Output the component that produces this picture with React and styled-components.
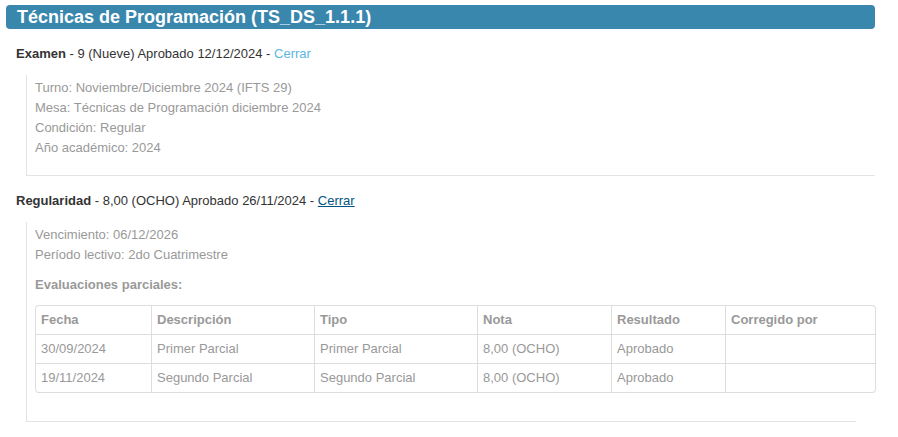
import React from 'react';
import styled, { createGlobalStyle } from 'styled-components';

const GlobalStyle = createGlobalStyle`
  body {
    margin: 0;
    background: #fff;
    font-family: "Liberation Sans", Arial, sans-serif;
    font-size: 13px;
    line-height: 20px;
    color: #333;
  }
`;

const rows = [
  { fecha: '30/09/2024', desc: 'Primer Parcial', tipo: 'Primer Parcial', nota: '8,00 (OCHO)', res: 'Aprobado', corr: '' },
  { fecha: '19/11/2024', desc: 'Segundo Parcial', tipo: 'Segundo Parcial', nota: '8,00 (OCHO)', res: 'Aprobado', corr: '' },
];

const columns = [
  ['Fecha', 'fecha', 116],
  ['Descripción', 'desc', 163],
  ['Tipo', 'tipo', 163],
  ['Nota', 'nota', 134],
  ['Resultado', 'res', 114],
  ['Corregido por', 'corr', 150],
];

export default function App() {
  return (
    <React.Fragment>
      <GlobalStyle />
      <Page>
        <TitleBar>Técnicas de Programación (TS_DS_1.1.1)</TitleBar>

        <Summary $top={15}>
          <b>Examen</b> - 9 (Nueve) Aprobado 12/12/2024 - <LinkText $variant='light'>Cerrar</LinkText>
        </Summary>
        <Detail $width={849} $top={11} $bottom={17}>
          <Line>Turno: Noviembre/Diciembre 2024 (IFTS 29)</Line>
          <Line>Mesa: Técnicas de Programación diciembre 2024</Line>
          <Line>Condición: Regular</Line>
          <Line>Año académico: 2024</Line>
        </Detail>

        <Summary $top={15}>
          <b>Regularidad</b> - 8,00 (OCHO) Aprobado 26/11/2024 - <LinkText $variant='dark'>Cerrar</LinkText>
        </Summary>
        <Detail $width={830} $top={11} $bottom={28}>
          <Line>Vencimiento: 06/12/2026</Line>
          <Line>Período lectivo: 2do Cuatrimestre</Line>
          <SubTitle>Evaluaciones parciales:</SubTitle>
          <Grades>
            <thead>
              <tr>
                {columns.map(([label, , w]) => (
                  <th key={label} style={{ width: w }}>{label}</th>
                ))}
              </tr>
            </thead>
            <tbody>
              {rows.map((r) => (
                <tr key={r.fecha}>
                  {columns.map(([label, key]) => (
                    <td key={label}>{r[key]}</td>
                  ))}
                </tr>
              ))}
            </tbody>
          </Grades>
        </Detail>
      </Page>
    </React.Fragment>
  );
}

const Page = styled.div`
  padding: 5px 0 0 6px;
  width: 869px;
`;

const TitleBar = styled.h2`
  margin: 0;
  height: 24px;
  line-height: 24px;
  padding: 0 0 0 11px;
  background-color: #3a87ad;
  border-radius: 4px;
  color: #fff;
  font-size: 18px;
  font-weight: bold;
`;

const Summary = styled.div`
  margin: ${(p) => p.$top ?? 13}px 0 0 10px;
  b {
    font-weight: bold;
  }
`;

const LinkText = styled.a`
  color: ${(p) => (p.$variant === 'dark' ? '#005580' : '#5bb5e0')};
  text-decoration: ${(p) => (p.$variant === 'dark' ? 'underline' : 'none')};
  cursor: pointer;
`;

const Detail = styled.div`
  margin: ${(p) => p.$top}px 0 0 20px;
  width: ${(p) => p.$width}px;
  box-sizing: border-box;
  padding: 3px 0 ${(p) => p.$bottom}px 8px;
  border-left: 1px solid #e3e3e3;
  border-bottom: 1px solid #e3e3e3;
  color: #999;
`;

const Line = styled.div``;

const SubTitle = styled.div`
  margin-top: 10px;
  font-weight: bold;
`;

const Grades = styled.table`
  margin-top: 10px;
  width: 840px;
  table-layout: fixed;
  border-collapse: separate;
  border-spacing: 0;
  border: 1px solid #ddd;
  border-left: 0;
  border-radius: 4px;
  color: #999;
  font-size: 13px;

  th,
  td {
    box-sizing: border-box;
    text-align: left;
    padding: 4px 5px;
    line-height: 20px;
    border-left: 1px solid #ddd;
    border-top: 1px solid #ddd;
    vertical-align: top;
  }

  thead tr:first-child th {
    border-top: 0;
  }

  th {
    font-weight: bold;
  }

  thead th:first-child {
    border-top-left-radius: 4px;
  }

  tbody tr:last-child td:first-child {
    border-bottom-left-radius: 4px;
  }
`;
